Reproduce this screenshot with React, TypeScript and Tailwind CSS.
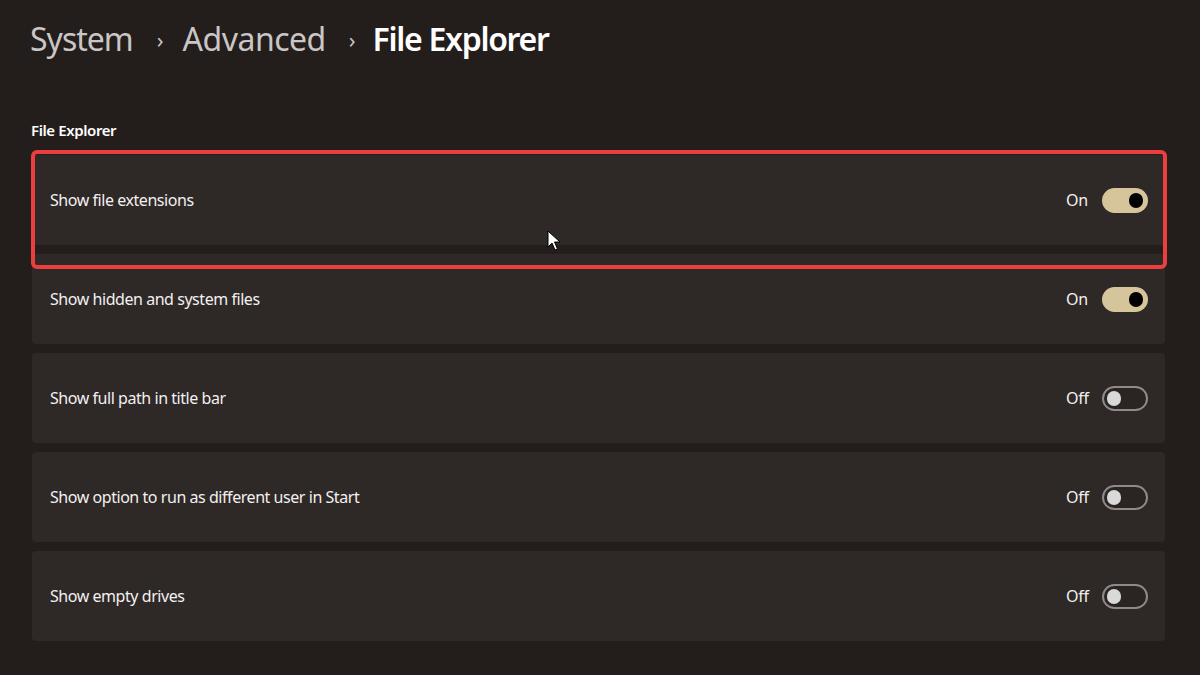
import React from "react";

type Row = { label: string; on: boolean };

const rows: Row[] = [
  { label: "Show file extensions", on: true },
  { label: "Show hidden and system files", on: true },
  { label: "Show full path in title bar", on: false },
  { label: "Show option to run as different user in Start", on: false },
  { label: "Show empty drives", on: false },
];

function Toggle({ on }: { on: boolean }) {
  if (on) {
    return (
      <div className="w-[46px] h-[25px] rounded-full bg-[#d6c59b] flex items-center justify-end pr-[5px]">
        <div className="w-[14px] h-[15px] rounded-full bg-black" />
      </div>
    );
  }
  return (
    <div className="w-[46px] h-[25px] rounded-full border-2 border-[#8f8a89] bg-[#2a2423] flex items-center pl-[3px]">
      <div className="w-[14px] h-[15px] rounded-full bg-[#d9d9d9]" />
    </div>
  );
}

export default function App() {
  return (
    <div
      className="w-[1200px] h-[675px] bg-[#231d1c] overflow-hidden relative"
      style={{ fontFamily: '"Noto Sans", "Open Sans", sans-serif' }}
    >
      <div className="pl-[30px] pt-[21px] flex items-center h-[57px]">
        <span className="text-[32px] text-[#c9c6c5] tracking-[-1px]">System</span>
        <span className="text-[22px] text-[#c9c6c5] ml-[24px] mr-[19px]">›</span>
        <span className="text-[32px] text-[#c9c6c5] tracking-[-0.5px]">Advanced</span>
        <span className="text-[22px] text-[#c9c6c5] ml-[23px] mr-[17px]">›</span>
        <span className="text-[32px] text-white font-semibold tracking-[-1.3px]">File Explorer</span>
      </div>

      <div className="pl-[31px] mt-[62px] h-[22px] text-[15px] font-semibold text-white tracking-[-0.4px]">
        File Explorer
      </div>

      <div className="ml-[32px] mr-[35px] mt-[14px] flex flex-col gap-[9px]">
        {rows.map((r) => (
          <div
            key={r.label}
            className="h-[90px] bg-[#2e2827] rounded-[4px] flex items-center pl-[18px] pr-[17px]"
          >
            <span className="flex-1 text-[16px] text-[#f2f0f0] tracking-[-0.45px]">{r.label}</span>
            <span className="text-[16px] text-[#f2f0f0] w-[36px] tracking-[-0.3px]">{r.on ? "On" : "Off"}</span>
            <Toggle on={r.on} />
          </div>
        ))}
      </div>

      {/* highlight */}
      <div className="absolute left-[31px] top-[150px] w-[1136px] h-[119px] border-[4px] border-[#ec3d3f] rounded-[6px] pointer-events-none" />

      {/* cursor */}
      <svg
        className="absolute left-[547px] top-[230px]"
        width="14"
        height="22"
        viewBox="0 0 14 22"
      >
        <path
          d="M1 1 L1 17 L5 13 L8 20 L10.5 19 L7.5 12 L13 12 Z"
          fill="white"
          stroke="black"
          strokeWidth="1"
          strokeLinejoin="round"
        />
      </svg>
    </div>
  );
}
